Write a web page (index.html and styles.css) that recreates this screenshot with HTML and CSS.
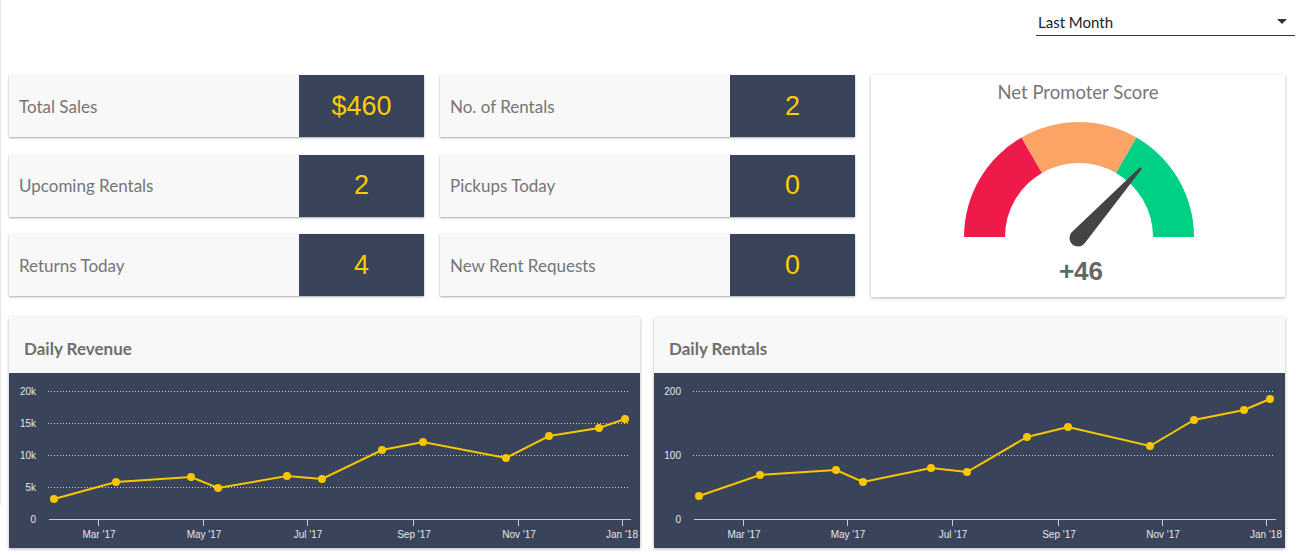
FILE: index.html
```html
<!DOCTYPE html>
<html lang="en">
<head>
<meta charset="utf-8">
<title>Dashboard</title>
<link rel="stylesheet" href="styles.css">
</head>
<body>
<div class="page">
  <header class="topbar">
    <div class="select">
      <span class="select-text">Last Month</span>
      <span class="caret"></span>
    </div>
  </header>

  <section class="top-row">
    <div class="stats">
      <div class="stat"><div class="stat-label">Total Sales</div><div class="stat-value money">$460</div></div>
      <div class="stat"><div class="stat-label">No. of Rentals</div><div class="stat-value">2</div></div>
      <div class="stat"><div class="stat-label">Upcoming Rentals</div><div class="stat-value">2</div></div>
      <div class="stat"><div class="stat-label">Pickups Today</div><div class="stat-value">0</div></div>
      <div class="stat"><div class="stat-label">Returns Today</div><div class="stat-value">4</div></div>
      <div class="stat"><div class="stat-label">New Rent Requests</div><div class="stat-value">0</div></div>
    </div>

    <div class="gauge-card">
      <div class="gauge-title">Net Promoter Score</div>
      <svg class="gauge-svg" width="414" height="193" viewBox="0 0 414 193">
        <g transform="translate(208,133)">
          <path d="M-115,0 A115,115 0 0,1 -57.5,-99.6 L-37,-64.1 A74,74 0 0,0 -74,0 Z" fill="#ee1a4a"/>
          <path d="M-57.5,-99.6 A115,115 0 0,1 57.5,-99.6 L37,-64.1 A74,74 0 0,0 -37,-64.1 Z" fill="#fca465"/>
          <path d="M57.5,-99.6 A115,115 0 0,1 115,0 L74,0 A74,74 0 0,0 37,-64.1 Z" fill="#00d084"/>
          <g transform="translate(-1,1) rotate(-48)">
            <path d="M0,-8.5 L94,-1.2 L94,1.2 L0,8.5 A8.5,8.5 0 0,1 0,-8.5 Z" fill="#444444"/>
          </g>
        </g>
        <text x="210" y="176" class="gauge-score" text-anchor="middle">+46</text>
      </svg>
    </div>
  </section>

  <section class="charts">
    <div class="chart-card">
      <div class="chart-head">Daily Revenue</div>
      <div class="chart-body">
        <svg width="631" height="175" viewBox="0 0 631 175">
          <g class="grid">
            <line x1="39" y1="18.5" x2="621" y2="18.5"/>
            <line x1="39" y1="50.5" x2="621" y2="50.5"/>
            <line x1="39" y1="82.5" x2="621" y2="82.5"/>
            <line x1="39" y1="114.5" x2="621" y2="114.5"/>
          </g>
          <g class="ylab">
            <text x="27" y="22">20k</text>
            <text x="27" y="54">15k</text>
            <text x="27" y="86">10k</text>
            <text x="27" y="118">5k</text>
            <text x="27" y="150">0</text>
          </g>
          <g class="axis">
            <line x1="40" y1="146.5" x2="622" y2="146.5"/>
            <line x1="89.5" y1="146" x2="89.5" y2="153"/>
            <line x1="194.5" y1="146" x2="194.5" y2="153"/>
            <line x1="298.5" y1="146" x2="298.5" y2="153"/>
            <line x1="404.5" y1="146" x2="404.5" y2="153"/>
            <line x1="509.5" y1="146" x2="509.5" y2="153"/>
            <line x1="613.5" y1="146" x2="613.5" y2="153"/>
          </g>
          <g class="xlab">
            <text x="90" y="165">Mar '17</text>
            <text x="195" y="165">May '17</text>
            <text x="299" y="165">Jul '17</text>
            <text x="405" y="165">Sep '17</text>
            <text x="510" y="165">Nov '17</text>
            <text x="613" y="165">Jan '18</text>
          </g>
          <polyline class="series" points="45,126 107,109 182,104 209,115 278,103 313,106 373,77 414,69 497,85 540,63 590,55 616,46"/>
          <g class="dots">
            <circle cx="45" cy="126" r="4"/><circle cx="107" cy="109" r="4"/><circle cx="182" cy="104" r="4"/>
            <circle cx="209" cy="115" r="4"/><circle cx="278" cy="103" r="4"/><circle cx="313" cy="106" r="4"/>
            <circle cx="373" cy="77" r="4"/><circle cx="414" cy="69" r="4"/><circle cx="497" cy="85" r="4"/>
            <circle cx="540" cy="63" r="4"/><circle cx="590" cy="55" r="4"/><circle cx="616" cy="46" r="4"/>
          </g>
        </svg>
      </div>
    </div>

    <div class="chart-card">
      <div class="chart-head">Daily Rentals</div>
      <div class="chart-body">
        <svg width="631" height="175" viewBox="0 0 631 175">
          <g class="grid">
            <line x1="39" y1="18.5" x2="621" y2="18.5"/>
            <line x1="39" y1="82.5" x2="621" y2="82.5"/>
          </g>
          <g class="ylab">
            <text x="27" y="22">200</text>
            <text x="27" y="86">100</text>
            <text x="27" y="150">0</text>
          </g>
          <g class="axis">
            <line x1="40" y1="146.5" x2="622" y2="146.5"/>
            <line x1="89.5" y1="146" x2="89.5" y2="153"/>
            <line x1="193.5" y1="146" x2="193.5" y2="153"/>
            <line x1="298.5" y1="146" x2="298.5" y2="153"/>
            <line x1="404.5" y1="146" x2="404.5" y2="153"/>
            <line x1="508.5" y1="146" x2="508.5" y2="153"/>
            <line x1="612.5" y1="146" x2="612.5" y2="153"/>
          </g>
          <g class="xlab">
            <text x="90" y="165">Mar '17</text>
            <text x="194" y="165">May '17</text>
            <text x="299" y="165">Jul '17</text>
            <text x="405" y="165">Sep '17</text>
            <text x="509" y="165">Nov '17</text>
            <text x="612" y="165">Jan '18</text>
          </g>
          <polyline class="series" points="45,123 106,102 182,97 209,109 277,95 313,99 373,64 414,54 496,73 540,47 590,37 616,26"/>
          <g class="dots">
            <circle cx="45" cy="123" r="4"/><circle cx="106" cy="102" r="4"/><circle cx="182" cy="97" r="4"/>
            <circle cx="209" cy="109" r="4"/><circle cx="277" cy="95" r="4"/><circle cx="313" cy="99" r="4"/>
            <circle cx="373" cy="64" r="4"/><circle cx="414" cy="54" r="4"/><circle cx="496" cy="73" r="4"/>
            <circle cx="540" cy="47" r="4"/><circle cx="590" cy="37" r="4"/><circle cx="616" cy="26" r="4"/>
          </g>
        </svg>
      </div>
    </div>
  </section>
</div>
</body>
</html>
```

FILE: styles.css
```css
* { box-sizing: border-box; }

html, body {
  margin: 0;
  padding: 0;
  background: #ffffff;
  font-family: Lato, "Open Sans", sans-serif;
}

.page {
  position: relative;
  width: 1297px;
  height: 555px;
  padding: 0 12px 0 9px;
  overflow: hidden;
}

.page::before {
  content: "";
  position: absolute;
  left: 0;
  top: 0;
  width: 1px;
  height: 505px;
  background: #e6e6e6;
}

.topbar {
  height: 75px;
  display: flex;
  justify-content: flex-end;
  align-items: flex-start;
  margin-right: -10px;
}

.select {
  margin-top: 8px;
  width: 259px;
  height: 28px;
  border-bottom: 1px solid #333333;
  display: flex;
  align-items: center;
  justify-content: space-between;
  padding: 0 8px 0 2px;
}

.select-text {
  font-size: 15px;
  color: #222222;
}

.caret {
  width: 0;
  height: 0;
  border-left: 5px solid transparent;
  border-right: 5px solid transparent;
  border-top: 5px solid #333333;
}

.top-row {
  display: flex;
  gap: 16px;
}

.stats {
  display: grid;
  grid-template-columns: 415px 415px;
  grid-auto-rows: 62px;
  column-gap: 16px;
  row-gap: 17.5px;
}

.stat {
  display: flex;
  background: #f8f8f8;
  box-shadow: 0 1px 2px rgba(0, 0, 0, 0.35);
}

.stat-label {
  flex: 1;
  display: flex;
  align-items: center;
  padding-left: 10px;
  font-size: 17px;
  color: #757575;
}

.stat-value {
  width: 125px;
  background: #394359;
  color: #fdcd00;
  display: flex;
  align-items: center;
  justify-content: center;
  font-family: "Liberation Sans", Arial, sans-serif;
  font-size: 27px;
}

.gauge-card {
  width: 414px;
  height: 222px;
  background: #ffffff;
  box-shadow: 0 1px 3px rgba(0, 0, 0, 0.3);
  display: flex;
  flex-direction: column;
}

.gauge-title {
  flex-shrink: 0;
  text-align: center;
  font-size: 18.5px;
  color: #767676;
  padding-top: 6px;
  height: 23px;
  line-height: 22px;
  box-sizing: content-box;
}

.gauge-svg {
  display: block;
  flex-shrink: 0;
}

.gauge-score {
  font-family: "Liberation Sans", Arial, sans-serif;
  font-weight: bold;
  font-size: 26px;
  fill: #666666;
}

.charts {
  margin-top: 20px;
  display: flex;
  gap: 14px;
}

.chart-card {
  width: 631px;
  box-shadow: 0 1px 3px rgba(0, 0, 0, 0.3);
}

.chart-head {
  height: 56px;
  background: #f8f8f8;
  padding-left: 15px;
  display: flex;
  align-items: center;
  padding-top: 6px;
  font-size: 17px;
  font-weight: bold;
  color: #6e6e6e;
}

.chart-body {
  height: 175px;
  background: #394359;
}

.chart-body svg {
  display: block;
}

.grid line {
  stroke: #ffffff;
  stroke-opacity: 0.75;
  stroke-width: 1;
  stroke-dasharray: 1 2;
}

.axis line {
  stroke: #c3cad8;
  stroke-width: 1;
}

.ylab text {
  font-family: "Liberation Sans", Arial, sans-serif;
  font-size: 10px;
  fill: #e3e7ee;
  text-anchor: end;
}

.xlab text {
  font-family: "Liberation Sans", Arial, sans-serif;
  font-size: 10px;
  fill: #e3e7ee;
  text-anchor: middle;
}

.series {
  fill: none;
  stroke: #f7c600;
  stroke-width: 2;
}

.dots circle {
  fill: #f7c600;
}
```
